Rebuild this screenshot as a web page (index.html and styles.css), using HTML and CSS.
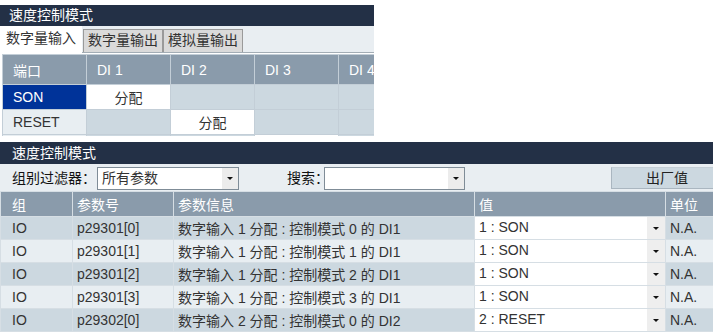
FILE: index.html
```html
<!DOCTYPE html>
<html lang="zh-CN">
<head>
  <meta charset="UTF-8">
  <meta name="viewport" content="width=device-width, initial-scale=1.0">
  <title>速度控制模式</title>
  <link rel="stylesheet" href="styles.css">
</head>
<body>
  <!-- DI assignment panel -->
  <div class="io-panel">
    <div class="panel-title">速度控制模式</div>
    <div class="tab-bar">
      <div class="tab tab-active">数字量输入</div>
      <div class="tab">数字量输出</div>
      <div class="tab">模拟量输出</div>
    </div>
    <table class="io-grid">
      <colgroup>
        <col class="io-col"><col class="io-col"><col class="io-col"><col class="io-col"><col class="io-col">
      </colgroup>
      <thead>
        <tr>
          <th>端口</th><th>DI 1</th><th>DI 2</th><th>DI 3</th><th>DI 4</th>
        </tr>
      </thead>
      <tbody>
        <tr>
          <td class="port port-selected">SON</td>
          <td class="assigned">分配</td><td></td><td></td><td></td>
        </tr>
        <tr>
          <td class="port">RESET</td>
          <td></td><td class="assigned">分配</td><td></td><td></td>
        </tr>
        <tr>
          <td class="port"></td>
          <td></td><td></td><td class="assigned"></td><td></td>
        </tr>
      </tbody>
    </table>
  </div>

  <!-- parameter list panel -->
  <div class="param-panel">
    <div class="panel-title">速度控制模式</div>
    <div class="toolbar">
      <span class="filter-label">组别过滤器：</span>
      <div class="combo combo-filter">
        <span class="combo-text">所有参数</span>
        <span class="combo-btn"><span class="arrow"></span></span>
      </div>
      <span class="search-label">搜索：</span>
      <div class="combo combo-search">
        <span class="combo-text"></span>
        <span class="combo-btn"><span class="arrow"></span></span>
      </div>
      <button class="btn-default" type="button">出厂值</button>
    </div>
    <table class="param-table">
      <colgroup>
        <col class="col-group"><col class="col-number"><col class="col-info"><col class="col-value"><col class="col-unit">
      </colgroup>
      <thead>
        <tr><th class="cell-group">组</th><th>参数号</th><th>参数信息</th><th>值</th><th>单位</th></tr>
      </thead>
      <tbody>
        <tr>
          <td class="cell-group">IO</td><td>p29301[0]</td><td>数字输入 1 分配 : 控制模式 0 的 DI1</td>
          <td class="cell-value"><div class="cell-combo"><span class="combo-text">1 : SON</span><span class="combo-btn"><span class="arrow"></span></span></div></td>
          <td>N.A.</td>
        </tr>
        <tr>
          <td class="cell-group">IO</td><td>p29301[1]</td><td>数字输入 1 分配 : 控制模式 1 的 DI1</td>
          <td class="cell-value"><div class="cell-combo"><span class="combo-text">1 : SON</span><span class="combo-btn"><span class="arrow"></span></span></div></td>
          <td>N.A.</td>
        </tr>
        <tr>
          <td class="cell-group">IO</td><td>p29301[2]</td><td>数字输入 1 分配 : 控制模式 2 的 DI1</td>
          <td class="cell-value"><div class="cell-combo"><span class="combo-text">1 : SON</span><span class="combo-btn"><span class="arrow"></span></span></div></td>
          <td>N.A.</td>
        </tr>
        <tr>
          <td class="cell-group">IO</td><td>p29301[3]</td><td>数字输入 1 分配 : 控制模式 3 的 DI1</td>
          <td class="cell-value"><div class="cell-combo"><span class="combo-text">1 : SON</span><span class="combo-btn"><span class="arrow"></span></span></div></td>
          <td>N.A.</td>
        </tr>
        <tr>
          <td class="cell-group">IO</td><td>p29302[0]</td><td>数字输入 2 分配 : 控制模式 0 的 DI2</td>
          <td class="cell-value"><div class="cell-combo"><span class="combo-text">2 : RESET</span><span class="combo-btn"><span class="arrow"></span></span></div></td>
          <td>N.A.</td>
        </tr>
      </tbody>
    </table>
  </div>
</body>
</html>
```

FILE: styles.css
```css
/* General Styles */
* {
  box-sizing: border-box;
}

body {
  font-family: "Liberation Sans", "Noto Sans CJK SC", sans-serif;
  font-size: 14px;
  color: #333;
  background-color: #fff;
  margin: 0;
  overflow: hidden;
}

.panel-title {
  height: 21px;
  line-height: 21px;
  padding-left: 9px;
  background-color: #233046;
  color: #fff;
}

/* DI assignment panel */
.io-panel {
  width: 374px;
  height: 131px;
  margin-top: 5px;
  overflow: hidden;
}

.tab-bar {
  display: flex;
  align-items: flex-end;
  height: 27px;
  background-color: #e9eef2;
  border-bottom: 1px solid #a3adb5;
}

.tab {
  height: 23px;
  line-height: 21px;
  padding: 0 4px;
  background-color: #dadada;
  border: 1px solid #9a9a9a;
  border-bottom: none;
  white-space: nowrap;
}

.tab-active {
  height: 27px;
  line-height: 25px;
  margin-bottom: -1px;
  margin-right: 1px;
  padding: 0 6px;
  background-color: #fff;
  border: none;
}

.io-grid {
  margin: 1px 0 0 2px;
  width: 421px;
  table-layout: fixed;
  border-spacing: 1px;
  background-color: #c3ced7;
}

.io-col {
  width: 83px;
}

.io-grid th {
  height: 29px;
  padding: 0 10px;
  background-color: #8a9bab;
  color: #fff;
  font-weight: normal;
  text-align: left;
  white-space: nowrap;
}

.io-grid td {
  height: 24px;
  padding: 0 10px;
  background-color: #ccd8e0;
}

.io-grid td.port {
  background-color: #e8eef2;
  color: #333;
}

.io-grid td.port-selected {
  background-color: #003399;
  color: #fff;
}

.io-grid td.assigned {
  background-color: #fff;
  text-align: center;
}

/* parameter list panel */
.param-panel {
  margin-top: 6px;
  overflow: hidden;
}

.param-panel .panel-title {
  height: 22px;
  line-height: 22px;
  padding-left: 12px;
}

.toolbar {
  display: flex;
  align-items: flex-start;
  height: 27px;
  padding: 3px 0 0 12px;
  background-color: #e9eef2;
}

.toolbar > * {
  flex-shrink: 0;
}

.filter-label,
.search-label {
  line-height: 23px;
  color: #111;
  white-space: nowrap;
}

.filter-label {
  margin-right: 1px;
}

.search-label {
  width: 37px;
  margin-left: 48px;
}

.combo {
  display: flex;
  width: 142px;
  height: 23px;
  background-color: #fff;
  border: 1px solid #7f8c97;
}

.combo-search {
  width: 141px;
}

.combo-text {
  flex: 1;
  padding-left: 4px;
  line-height: 21px;
  white-space: nowrap;
}

.combo-btn {
  display: flex;
  align-items: center;
  justify-content: center;
  width: 16px;
  background-color: #ececec;
}

.arrow {
  width: 0;
  height: 0;
  border-left: 3px solid transparent;
  border-right: 3px solid transparent;
  border-top: 3px solid #111;
}

.btn-default {
  width: 112px;
  height: 22px;
  margin-left: 146px;
  padding: 0;
  font-family: inherit;
  font-size: 14px;
  line-height: 20px;
  color: #222;
  background-color: #ccd8e0;
  border: 1px solid #aab6c0;
  border-top-color: #c4ced6;
}

.param-table {
  width: 727px;
  table-layout: fixed;
  border-spacing: 1px;
  background-color: #d6dee4;
}

.col-group { width: 71px; }
.col-number { width: 100px; }
.col-info { width: 300px; }
.col-value { width: 190px; }
.col-unit { width: 60px; }

.param-table th {
  height: 24px;
  padding: 0 4px;
  background-color: #8a9bab;
  color: #fff;
  font-weight: normal;
  text-align: left;
}

.param-table td {
  height: 22px;
  padding: 0 4px;
  white-space: nowrap;
  overflow: hidden;
}

.param-table tbody tr:nth-child(odd) td {
  background-color: #ccd8e0;
}

.param-table tbody tr:nth-child(even) td {
  background-color: #e8eef2;
}

.param-table .cell-group {
  padding-left: 11px;
}

.param-table td.cell-value {
  padding: 0;
}

.cell-combo {
  display: flex;
  height: 22px;
  background-color: #fff;
}

.cell-combo .combo-btn {
  width: 18px;
  background-color: #eee;
}
```
